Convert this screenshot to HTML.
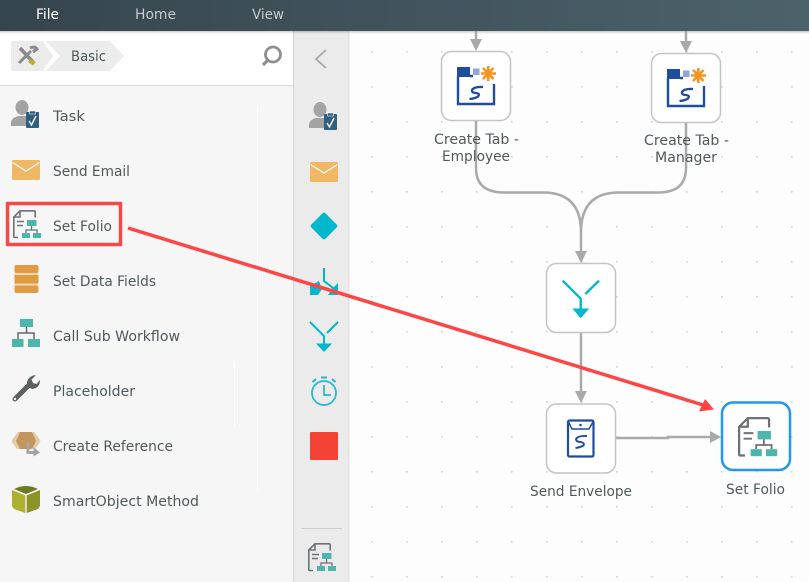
<!DOCTYPE html>
<html lang="en">
<head>
<meta charset="utf-8">
<title>Workflow Designer</title>
<style>
html,body{margin:0;padding:0;width:809px;height:582px;overflow:hidden;background:#fdfdfd}
svg{display:block;filter:blur(.3px)}
text{font-family:"DejaVu Sans",sans-serif;font-size:14px;fill:#4f595d}
.hd{fill:#c4cacd}
</style>
</head>
<body>
<svg width="809" height="582" viewBox="0 0 809 582" xmlns="http://www.w3.org/2000/svg">
<defs>
<linearGradient id="hdr" x1="0" x2="1" y1="0" y2="0"><stop offset="0" stop-color="#36454d"/><stop offset="1" stop-color="#4c626b"/></linearGradient>
<linearGradient id="shd" x1="0" x2="0" y1="0" y2="1"><stop offset="0" stop-color="#000" stop-opacity=".2"/><stop offset="1" stop-color="#000" stop-opacity="0"/></linearGradient>
<pattern id="dots" x="21" y="16" width="35" height="35" patternUnits="userSpaceOnUse"><rect x="0" y="0" width="1.600" height="1.600" fill="#d2d2d2"/></pattern>
<g id="folio">
<path d="M5 27.500H1.500Q.8 27.500 .8 26.500V7L7 .8H21Q22.200 .8 22.200 2V7.500M7 1V7H1" fill="none" stroke="#6d7275" stroke-width="1.600"/>
<path d="M4 11.500H11M4 15.500H10" stroke="#6d7275" stroke-width="1.400"/>
<rect x="14" y="10" width="9.500" height="6" fill="#4db6ac"/>
<path d="M18.500 16V20M13 23V20H24V23" fill="none" stroke="#6d7275" stroke-width="1.300"/>
<rect x="9" y="23" width="8" height="5" fill="#4db6ac"/><rect x="20" y="23" width="8" height="5" fill="#4db6ac"/>
</g>
<g id="task">
<ellipse cx="22" cy="107.500" rx="6.500" ry="7.500" fill="#a3a3a3"/>
<path d="M11 126V123Q11 118 18 116H26V126Z" fill="#a3a3a3"/>
<rect x="26" y="112" width="13" height="16" rx="1" fill="#2f5f80"/>
<rect x="29.500" y="111" width="6" height="3" fill="#2f5f80" stroke="#f6f6f6" stroke-width=".6"/>
<path d="M29 121L31.500 125L36 116" fill="none" stroke="#fff" stroke-width="1.400"/>
</g>
<g id="mail">
<rect x="0" y="0" width="28" height="20" rx="1.500" fill="#f0b764"/>
<path d="M0.500 2.500L14 11L27.500 2.500" fill="none" stroke="#fff" stroke-width="1.300"/>
</g>
<g id="tab">
<rect x="0" y="0" width="13" height="10" fill="#1f4d9e"/>
<path d="M1 9V37H37V17M13 9H16" fill="none" stroke="#1f4d9e" stroke-width="2.400"/>
<rect x="16" y="1.500" width="6.500" height="6.500" fill="#8fa6d6"/>
<path d="M31.300 -1V14M24 6.500H39M26 1L36.500 12M36.500 1L26 12" stroke="#f7931e" stroke-width="2.600"/>
<path d="M26 20Q17 19.500 15 23Q14.500 26 19 26Q23.500 26.500 21 29.500Q18 31.500 12.500 32" fill="none" stroke="#1f4d9e" stroke-width="2.300"/>
</g>
<path id="head" d="M-6 -8L6 -8L0 4Z" fill="#a9a9a9"/>
</defs>

<rect width="809" height="582" fill="#fdfdfd"/>
<rect x="349" y="31" width="460" height="551" fill="url(#dots)"/>

<!-- sidebar -->
<rect x="0" y="31" width="293" height="54" fill="#fff"/>
<rect x="0" y="86" width="293" height="496" fill="#f6f6f6"/>
<rect x="0" y="85" width="348" height="1" fill="#d9d9d9"/>
<rect x="294" y="31" width="54" height="551" fill="#ebebeb"/>
<rect x="293" y="31" width="1" height="551" fill="#d5d5d5"/>
<rect x="348" y="31" width="1.500" height="551" fill="#e2e2e2"/>
<rect x="257" y="106" width="1" height="384" fill="#fff"/>
<rect x="234" y="362" width="1" height="64" fill="#fff"/>
<rect x="301" y="528" width="41" height="1" fill="#cfcfcf"/>

<!-- header -->
<rect width="809" height="31" fill="url(#hdr)"/>
<rect y="31" width="809" height="3" fill="url(#shd)"/>
<text x="36" y="19" class="hd" style="fill:#fff" textLength="23" lengthAdjust="spacingAndGlyphs">File</text>
<text x="135" y="19" class="hd" textLength="41" lengthAdjust="spacingAndGlyphs">Home</text>
<text x="252" y="19" class="hd" textLength="32" lengthAdjust="spacingAndGlyphs">View</text>

<!-- breadcrumb -->
<path d="M11 41H43L53 56L43 71H11Z" fill="#ececec"/>
<path d="M46 41H110L124 56L110 71H46L60 56Z" fill="#ececec"/>
<path d="M20 48L33 62" stroke="#8b8b8b" stroke-width="3.500"/>
<path d="M19 63L31 51M30 48Q35 46 37 49L33 52" fill="none" stroke="#8b8b8b" stroke-width="3"/>
<path d="M30 59L36 62L33 65.500L28 62Z" fill="#c0b02c"/>
<text x="71" y="61" textLength="35" lengthAdjust="spacingAndGlyphs">Basic</text>
<circle cx="273" cy="54.500" r="7.500" fill="none" stroke="#8e8e8e" stroke-width="2.800"/>
<path d="M268 60L263 65" stroke="#8e8e8e" stroke-width="3.200"/>
<path d="M326 50L316 59L326 68" fill="none" stroke="#a9a9a9" stroke-width="1.800"/>

<!-- left list -->
<use href="#task"/>
<text x="53" y="121" textLength="32" lengthAdjust="spacingAndGlyphs">Task</text>
<use href="#mail" x="12" y="160"/>
<text x="53" y="176" textLength="77" lengthAdjust="spacingAndGlyphs">Send Email</text>
<use href="#folio" x="13" y="210"/>
<text x="53" y="231" textLength="59" lengthAdjust="spacingAndGlyphs">Set Folio</text>
<rect x="14.500" y="265" width="24" height="28" rx="2.500" fill="#f3d9b3"/>
<rect x="14.500" y="265" width="24" height="8" rx="2" fill="#e09c45"/>
<rect x="14.500" y="275" width="24" height="8.500" fill="#e09c45"/>
<rect x="14.500" y="285.500" width="24" height="7.500" rx="2" fill="#e09c45"/>
<text x="53" y="286" textLength="103" lengthAdjust="spacingAndGlyphs">Set Data Fields</text>
<path d="M26.500 327V333M18 339V333H34V339" fill="none" stroke="#666" stroke-width="1.500"/>
<rect x="20" y="319" width="13" height="8" fill="#4db6ac"/>
<rect x="12" y="339" width="11.500" height="8" fill="#4db6ac"/>
<rect x="28" y="339" width="12" height="8" fill="#4db6ac"/>
<text x="53" y="341" textLength="127" lengthAdjust="spacingAndGlyphs">Call Sub Workflow</text>
<path d="M15 399L30 384" stroke="#5b6063" stroke-width="5" stroke-linecap="round"/>
<path d="M27.500 387Q25 379 33 375.500L36 375L31.500 379.500L33 383L36.500 384L40 380Q40 388 32 389Z" fill="#5b6063"/>
<circle cx="15" cy="399" r="1.200" fill="#f6f6f6"/>
<text x="53" y="396" textLength="82" lengthAdjust="spacingAndGlyphs">Placeholder</text>
<path d="M18 432H34L41 441L35 449H17L11 441Z" fill="#e7cba8"/>
<path d="M20 432H32L36 441L32 449H20L16 441Z" fill="#c2965f"/>
<path d="M15 432L11 441L15 449M37 432L41 441L37 449" fill="none" stroke="#f6f6f6" stroke-width="1"/>
<path d="M28 443V452.500H36" fill="none" stroke="#a5a5a5" stroke-width="3"/>
<path d="M33.500 447L40 452.500L33.500 456.500Z" fill="#a5a5a5"/>
<text x="53" y="451" textLength="120" lengthAdjust="spacingAndGlyphs">Create Reference</text>
<path d="M14 489Q26 483 38 489L26 494Z" fill="#6d7a1f"/>
<path d="M12 490L25.300 495.500V513L14 509L12 506Z" fill="#acb02e"/>
<path d="M40 490L26.700 495.500V513L38 509L40 506Z" fill="#8b9527"/>
<text x="53" y="506" textLength="146" lengthAdjust="spacingAndGlyphs">SmartObject Method</text>

<!-- strip icons -->
<use href="#task" x="298" y="2"/>
<use href="#mail" x="310" y="162"/>
<rect x="314" y="216" width="20" height="20" rx="2" fill="#00b7cc" transform="rotate(45 324 226)"/>
<path d="M324 268V281L337 291" fill="none" stroke="#00b7cc" stroke-width="2"/>
<path d="M310 295V286L319 281L322 289L318 295Z" fill="#00b7cc"/>
<path d="M328 295L332 289L338 283V295Z" fill="#00b7cc"/>
<path d="M310 322L324 336V345M338 322L327 333" fill="none" stroke="#00b7cc" stroke-width="2"/>
<path d="M316 343.500H332L324 352Z" fill="#00b7cc"/>
<circle cx="324" cy="393" r="12" fill="none" stroke="#1fb9d0" stroke-width="1.700"/>
<path d="M324 385V395H331" fill="none" stroke="#1fb9d0" stroke-width="1.700"/>
<path d="M321 377.500H327M312.500 382L316 379M335.500 382L332 379" stroke="#1fb9d0" stroke-width="2"/>
<rect x="310" y="432" width="28" height="28" rx="1" fill="#f44336"/>
<use href="#folio" x="308" y="543"/>

<!-- connectors -->
<g fill="none" stroke="#aaa" stroke-width="2.500">
<path d="M476 31V44M686 31V46"/>
<path d="M476 121V168Q476 192.500 504 192.500H543Q581 192.500 581 232V256"/>
<path d="M686 123V168Q686 192.500 658 192.500H619Q581 192.500 581 232"/>
<path d="M581 333V396"/>
<path d="M616 438H668V437H712"/>
</g>
<use href="#head" x="476" y="47"/>
<use href="#head" x="686" y="49"/>
<use href="#head" x="581" y="259"/>
<use href="#head" x="581" y="399"/>
<path d="M710 431L721 437L710 443Z" fill="#a9a9a9"/>

<!-- nodes -->
<g fill="#fff" stroke="#c4c4c4" stroke-width="1.500">
<rect x="441.500" y="51.500" width="69" height="69" rx="10"/>
<rect x="651.500" y="53.500" width="69" height="69" rx="10"/>
<rect x="546.500" y="263.500" width="69" height="69" rx="10"/>
<rect x="546.500" y="404" width="69" height="69" rx="10"/>
</g>
<rect x="722" y="402.500" width="68" height="67.500" rx="11" fill="#fff" stroke="#2196f3" stroke-width="2.500"/>
<use href="#tab" x="457" y="67"/>
<use href="#tab" x="667" y="69"/>
<path d="M562.700 280.700L580.700 298.700V309M599 280.700L585.300 294" fill="none" stroke="#00b7cc" stroke-width="2.400"/>
<path d="M572.300 308.500H589.300L580.700 318.300Z" fill="#00b7cc"/>
<rect x="568" y="420.500" width="25.500" height="36" rx="1.500" fill="none" stroke="#1f4d9e" stroke-width="2.200"/>
<path d="M568 421L572 429H589L593.500 421" fill="none" stroke="#1f4d9e" stroke-width="1.500"/>
<circle cx="580.500" cy="425" r="1.300" fill="#1f4d9e"/>
<path d="M587 436Q578 435.500 576 439Q576 442 581 442Q585 443 583.500 445.500Q580 447.500 575.500 448" fill="none" stroke="#1f4d9e" stroke-width="1.900"/>
<use href="#folio" transform="translate(738 417) scale(1.400)"/>

<!-- node labels -->
<text x="434" y="144" textLength="85" lengthAdjust="spacingAndGlyphs">Create Tab -</text>
<text x="442" y="161" textLength="68" lengthAdjust="spacingAndGlyphs">Employee</text>
<text x="644" y="145" textLength="85" lengthAdjust="spacingAndGlyphs">Create Tab -</text>
<text x="655" y="162" textLength="62" lengthAdjust="spacingAndGlyphs">Manager</text>
<text x="530" y="496" textLength="102" lengthAdjust="spacingAndGlyphs">Send Envelope</text>
<text x="726" y="494" textLength="59" lengthAdjust="spacingAndGlyphs">Set Folio</text>

<!-- annotation -->
<rect x="7.500" y="203.500" width="113" height="41" fill="none" stroke="#ff4444" stroke-width="3.400"/>
<path d="M128 228L703 405" fill="none" stroke="#ff4444" stroke-width="3.500"/>
<path d="M714 409.500L705 399L699 411.500Z" fill="#ff4444"/>
</svg>
</body>
</html>
